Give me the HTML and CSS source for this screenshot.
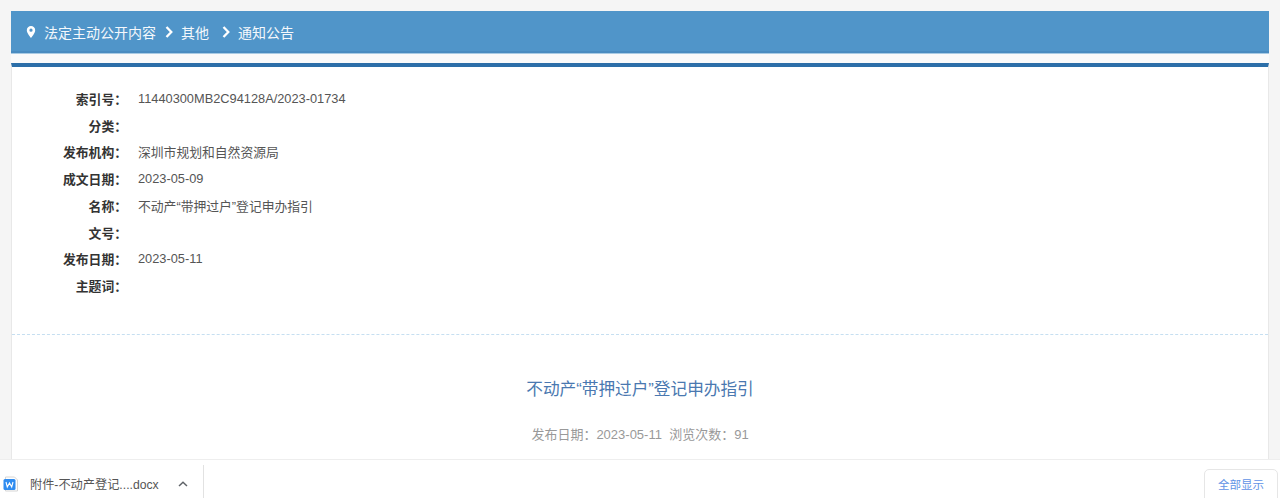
FILE: index.html
```html
<!DOCTYPE html>
<html lang="zh-CN">
<head>
<meta charset="utf-8">
<title>不动产“带押过户”登记申办指引</title>
<link rel="stylesheet" href="styles.css">
</head>
<body>
<div class="page">
  <main class="wrap">
    <header class="crumbs">
      <svg class="pin" viewBox="0 0 10 12" width="10" height="12"><path fill="#fff" fill-rule="evenodd" d="M5 0a4.2 4.2 0 0 0-4.2 4.2C.8 7.2 5 12 5 12s4.2-4.8 4.2-7.8A4.2 4.2 0 0 0 5 0Zm0 5.8a1.6 1.6 0 1 1 0-3.2 1.6 1.6 0 0 1 0 3.2Z"/></svg>
      <span>法定主动公开内容</span>
      <svg class="chev" viewBox="0 0 8 12" width="8" height="12"><path d="M1.5 1 6.300 6l-4.800 5" fill="none" stroke="#fff" stroke-width="2.300"/></svg>
      <span>其他</span>
      <svg class="chev chev-wide" viewBox="0 0 8 12" width="8" height="12"><path d="M1.5 1 6.300 6l-4.800 5" fill="none" stroke="#fff" stroke-width="2.300"/></svg>
      <span>通知公告</span>
    </header>
    <div class="spacer"></div>
    <section class="content">
      <dl class="meta">
        <div class="row"><dt>索引号：</dt><dd>11440300MB2C94128A/2023-01734</dd></div>
        <div class="row"><dt>分类：</dt><dd></dd></div>
        <div class="row"><dt>发布机构：</dt><dd>深圳市规划和自然资源局</dd></div>
        <div class="row"><dt>成文日期：</dt><dd>2023-05-09</dd></div>
        <div class="row"><dt>名称：</dt><dd>不动产“带押过户”登记申办指引</dd></div>
        <div class="row"><dt>文号：</dt><dd></dd></div>
        <div class="row"><dt>发布日期：</dt><dd>2023-05-11</dd></div>
        <div class="row"><dt>主题词：</dt><dd></dd></div>
      </dl>
      <h1 class="title">不动产“带押过户”登记申办指引</h1>
      <p class="info">发布日期：2023-05-11&nbsp;&nbsp;浏览次数：91</p>
    </section>
  </main>
  <footer class="downloads">
    <div class="item">
      <svg class="file" viewBox="0 0 16 16" width="16" height="16"><path d="M2.5 1h9l3 3v11h-12z" fill="#fff" stroke="#d5d5d5"/><rect x="0.5" y="3" width="12" height="11" rx="1.5" fill="#2f8cf0"/><path d="M3 6l1.3 5L6.500 7l2.200 4L10 6" fill="none" stroke="#fff" stroke-width="1.100"/></svg>
      <span class="name">附件-不动产登记....docx</span>
      <svg class="up" viewBox="0 0 10 6" width="10" height="6"><path d="M1 5 5 1.300 9 5" fill="none" stroke="#5f6368" stroke-width="1.500"/></svg>
    </div>
    <button class="all">全部显示</button>
  </footer>
</div>
</body>
</html>
```
FILE: styles.css
```css
* { box-sizing: border-box; }
html, body { margin: 0; height: 100%; overflow: hidden; }
body { background: #f5f5f5; font-family: "Liberation Sans", "Noto Sans CJK SC", sans-serif; color: #444; }
.page { height: 498px; display: flex; flex-direction: column; padding-top: 11px; }
.wrap { flex: 1; min-height: 0; margin: 0 11px; display: flex; flex-direction: column; overflow: hidden; }
.crumbs { height: 43px; flex: none; background: #5095c9; border-bottom: 1px solid #a9cbe4; box-shadow: inset 0 -2px 0 #4a8cc0; color: #f4f8fc; font-size: 14px; display: flex; align-items: center; padding: 0 0 0 15px; }
.pin { margin-right: 8px; }
.chev { margin: 0 8px 0 9px; }
.chev-wide { margin: 0 8px 0 13px; }
.spacer { height: 9px; flex: none; background: #fafafa; }
.content { flex: 1; background: #fff; border-top: 4px solid #2c6ea8; border-left: 1px solid #e8e8e8; border-right: 1px solid #e8e8e8; display: flex; flex-direction: column; }
.meta { margin: 0; padding: 18px 0 34px; border-bottom: 1px dashed #c6dff1; height: 268px; }
.row { display: flex; height: 26.750px; align-items: center; font-size: 12.800px; }
dt { width: 115px; text-align: right; font-weight: bold; color: #333; flex: none; }
dd { margin: 0 0 0 11px; color: #555; }
.title { margin: 43px 0 0; font-size: 16.650px; font-weight: normal; line-height: 24px; color: #4a78b0; text-align: center; }
.info { margin: 24px 0 0; font-size: 13px; line-height: 18px; color: #999; text-align: center; }
.downloads { height: 39px; flex: none; background: #fff; border-top: 1px solid #eee; display: flex; align-items: flex-start; justify-content: space-between; position: relative; }
.item { height: 33px; width: 204px; margin-top: 5px; border-right: 1px solid #e2e2e2; display: flex; align-items: center; padding: 4px 0 0 3px; font-size: 12.200px; color: #555; }
.name { margin-left: 11px; width: 137px; white-space: nowrap; }
.up { margin-left: 11px; }
.all { width: 74px; height: 34px; margin: 9px 2px 0 0; background: #fff; border: 1px solid #e6e6e6; border-radius: 5px; color: #5f93e6; font: 11.500px "Liberation Sans", "Noto Sans CJK SC", sans-serif; padding: 0 0 4px; }
```
